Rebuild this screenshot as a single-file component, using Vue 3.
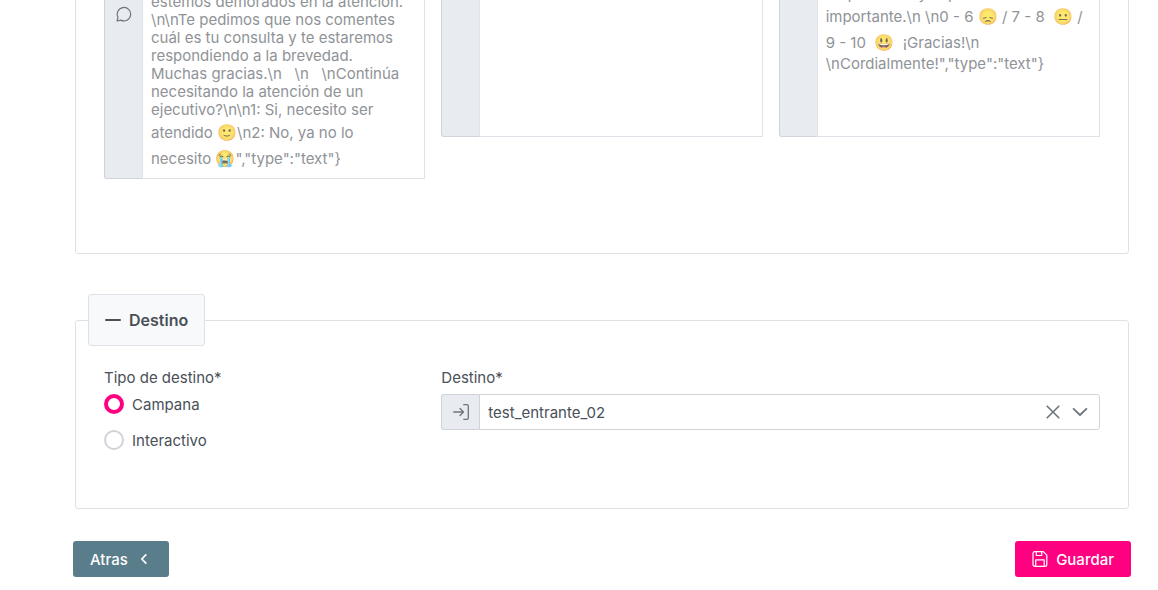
<script setup>
import { computed, ref } from 'vue'

const tipo = ref('campana')
const destino = ref('test_entrante_02')

const messages = ref([
  {
    label: 'Mensaje de espera',
    size: 'tall',
    text: 'estemos demorados en la atención. \\n\\nTe pedimos que nos comentes cuál es tu consulta y te estaremos respondiendo a la brevedad. Muchas gracias.\\n   \\n   \\nContinúa necesitando la atención de un ejecutivo?\\n\\n1: Si, necesito ser atendido 🙂\\n2: No, ya no lo necesito 😭","type":"text"}'
  },
  { label: 'Mensaje intermedio', size: 'short', text: '' },
  {
    label: 'Mensaje de encuesta',
    size: 'short',
    text: 'responda muy imp\nimportante.\\n \\n0 - 6 😞 / 7 - 8  😐 / 9 - 10  😃  ¡Gracias!\\n \\nCordialmente!","type":"text"}'
  }
])

// The preview layer sets emoji larger than the surrounding text, which a textarea cannot do.
const TOKEN = /\p{Extended_Pictographic}|\s+|[^\s\p{Extended_Pictographic}]+/gu
const isEmoji = (token) => /^\p{Extended_Pictographic}$/u.test(token)
const previews = computed(() => messages.value.map((m) => m.text.match(TOKEN) ?? []))
</script>

<template>
  <main class="page">
    <section class="panel messages" aria-label="Mensajes">
      <div v-for="(m, i) in messages" :key="m.label" class="group" :class="m.size">
        <span class="addon chat">
          <svg v-if="m.size === 'tall'" viewBox="0 0 16 16" width="16" height="16" fill="none" stroke="currentColor" stroke-width="1.2" stroke-linejoin="round">
            <path d="M1.1 15 L2 11.3 A6.7 6.7 0 1 1 4.8 14.1 Z" />
          </svg>
        </span>
        <div class="editor">
          <textarea v-model="m.text" disabled :aria-label="m.label"></textarea>
          <div class="preview" aria-hidden="true"><span v-for="(token, j) in previews[i]" :key="j" :class="{ emoji: isEmoji(token) }">{{ token }}</span></div>
        </div>
      </div>
    </section>

    <section class="panel destination">
      <button class="legend" type="button" aria-expanded="true">
        <svg viewBox="0 0 16 16" width="16" height="16" fill="none" stroke="currentColor" stroke-width="1.8" stroke-linecap="round"><path d="M.9 8H15.1" /></svg>
        Destino
      </button>
      <div class="fields">
        <div class="field" role="radiogroup" aria-labelledby="tipo">
          <span id="tipo" class="label">Tipo de destino*</span>
          <label class="radio"><input v-model="tipo" type="radio" name="tipo" value="campana" />Campana</label>
          <label class="radio"><input v-model="tipo" type="radio" name="tipo" value="interactivo" />Interactivo</label>
        </div>
        <div class="field wide">
          <label class="label" for="destino">Destino*</label>
          <div class="select-group">
            <span class="addon enter">
              <svg viewBox="0 0 16 16" width="16" height="16" fill="none" stroke="currentColor" stroke-width="1.3" stroke-linecap="round" stroke-linejoin="round">
                <path d="M.7 8H10.5M7 4.5 10.5 8 7 11.5M10.7.7H13.7A1.6 1.6 0 0 1 15.3 2.3V13.7A1.6 1.6 0 0 1 13.7 15.3H10.7" />
              </svg>
            </span>
            <select id="destino" v-model="destino">
              <option value="test_entrante_02">test_entrante_02</option>
            </select>
            <button class="clear" type="button" aria-label="Quitar destino" @click="destino = ''">
              <svg viewBox="0 0 14 14" width="14" height="14" fill="none" stroke="currentColor" stroke-width="1.6" stroke-linecap="round"><path d="M1.2 1.2 12.8 12.8M12.8 1.2 1.2 12.8" /></svg>
            </button>
            <svg class="chevron" viewBox="0 0 16 16" width="16" height="16" fill="none" stroke="currentColor" stroke-width="1.8" stroke-linecap="round" stroke-linejoin="round"><path d="M1.6 4.9 8 11 14.4 4.9" /></svg>
          </div>
        </div>
      </div>
    </section>

    <footer class="actions">
      <button class="btn back" type="button">
        Atras
        <svg viewBox="0 0 16 16" width="16" height="16" fill="none" stroke="currentColor" stroke-width="1.7" stroke-linecap="round" stroke-linejoin="round"><path d="M9.8 3.8 5.8 8 9.8 12.2" /></svg>
      </button>
      <button class="btn save" type="button">
        <svg viewBox="0 0 16 16" width="16" height="16" fill="none" stroke="currentColor" stroke-width="1.2" stroke-linejoin="round">
          <path d="M2.6.7H11.3L14.8 4.2V13.4A1.9 1.9 0 0 1 12.9 15.3H2.9A1.9 1.9 0 0 1 1 13.4V2.5A1.8 1.8 0 0 1 2.6.7ZM4.3.9V4.5H9.7V.9M3.7 15.2V8.8H12.2V15.2" />
        </svg>
        Guardar
      </button>
    </footer>
  </main>
</template>

<style>
body {
  background: #fff;
}
</style>

<style scoped>
.page {
  box-sizing: border-box;
  padding: 0 27px 13px 73px;
  color: #495057;
  font-family: Inter, "Liberation Sans", sans-serif;
  font-size: 15px;
  overflow: hidden;
}
button,
select,
textarea {
  font: inherit;
}
.panel {
  margin: 0 2px;
  border: 1px solid #dee2e6;
  border-radius: 3px;
}
.messages {
  display: grid;
  grid-template-columns: repeat(3, 1fr);
  gap: 16px;
  align-items: start;
  padding: 0 28px 74px;
  margin-top: -20px;
}
.group {
  display: flex;
  min-height: 156px;
}
.tall {
  min-height: 198px;
}
.addon {
  box-sizing: border-box;
  display: flex;
  flex: none;
  justify-content: center;
  width: 38px;
  background: #e8ebf0;
  border: 1px solid #ced4da;
  border-right: 0;
  border-radius: 3px 0 0 3px;
  color: #6c757d;
}
.chat {
  padding-top: 24px;
}
.editor {
  box-sizing: border-box;
  display: grid;
  flex: 1;
  min-width: 0;
  border: 1px solid #dfe2e8;
}
textarea,
.preview {
  box-sizing: border-box;
  grid-area: 1 / 1;
  width: 100%;
  min-width: 0;
  margin: 0;
  padding: 11px 14px 0 8px;
  line-height: 18px;
}
textarea {
  border: 0;
  opacity: 0;
  overflow: hidden;
  resize: none;
}
.preview {
  color: #8f9397;
  white-space: pre-wrap;
  pointer-events: none;
}
.short .preview {
  padding-top: 3px;
}
.emoji {
  display: inline-block;
  padding: 4px 0;
  font-size: 16px;
  opacity: 0.7;
}
.destination {
  margin-top: 66px;
  padding: 0 12px 58px;
}
.legend {
  display: flex;
  align-items: center;
  gap: 8px;
  height: 52px;
  margin-top: -27px;
  padding: 0 16px;
  background: #f8f9fa;
  border: 1px solid #dee2e6;
  border-radius: 3px;
  color: #495057;
  font-size: 16px;
  font-weight: 600;
}
.fields {
  display: grid;
  grid-template-columns: repeat(3, 1fr);
  gap: 16px;
  padding: 20px 16px 0;
}
.wide {
  grid-column: span 2;
}
.label {
  display: block;
  line-height: 24px;
  margin-bottom: 4px;
}
.radio {
  display: flex;
  align-items: center;
  gap: 8px;
  height: 20px;
  margin-bottom: 16px;
}
.radio:last-child {
  margin-bottom: 0;
}
.radio input {
  appearance: none;
  box-sizing: border-box;
  width: 20px;
  height: 20px;
  margin: 0;
  background: #fff;
  border: 2px solid #ced4da;
  border-radius: 50%;
}
.radio input:checked {
  border: 4px solid #ff0080;
}
.select-group {
  position: relative;
  display: flex;
  height: 36px;
}
.enter {
  align-items: center;
}
select {
  appearance: none;
  box-sizing: border-box;
  flex: 1;
  min-width: 0;
  padding: 0 64px 0 8px;
  background: #fff;
  border: 1px solid #ced4da;
  border-radius: 0 3px 3px 0;
  color: #495057;
}
.clear {
  position: absolute;
  top: 11px;
  right: 40px;
  display: flex;
  padding: 0;
  background: none;
  border: 0;
  color: #6c757d;
}
.chevron {
  position: absolute;
  top: 10px;
  right: 12px;
  color: #6c757d;
  pointer-events: none;
}
.actions {
  display: flex;
  justify-content: space-between;
  margin-top: 32px;
}
.btn {
  display: flex;
  align-items: center;
  gap: 8px;
  height: 36px;
  padding: 0 17px;
  border: 0;
  border-radius: 3px;
  color: #fff;
  font-weight: 500;
}
.back {
  background: #5a7d8c;
}
.save {
  background: #ff0080;
}
</style>
